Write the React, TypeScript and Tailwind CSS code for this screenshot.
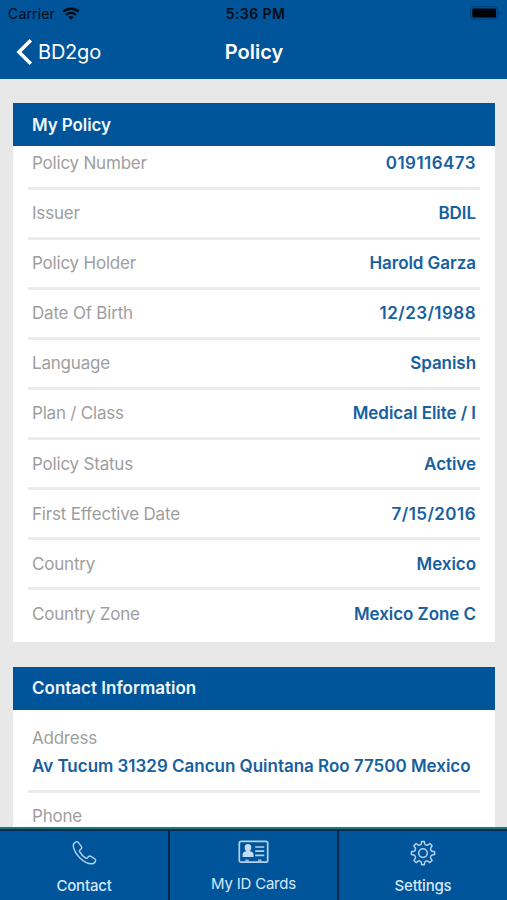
import React from 'react';

const policyRows = [
  { label: 'Policy Number', value: '019116473', numeric: true },
  { label: 'Issuer', value: 'BDIL' },
  { label: 'Policy Holder', value: 'Harold Garza' },
  { label: 'Date Of Birth', value: '12/23/1988', numeric: true },
  { label: 'Language', value: 'Spanish' },
  { label: 'Plan / Class', value: 'Medical Elite / I' },
  { label: 'Policy Status', value: 'Active' },
  { label: 'First Effective Date', value: '7/15/2016', numeric: true },
  { label: 'Country', value: 'Mexico' },
  { label: 'Country Zone', value: 'Mexico Zone C' },
];

const WifiIcon = () => (
  <svg width="18" height="13" viewBox="0 0 18 13" fill="none" stroke="#020d18">
    <path d="M1.200 4.700C5.600.700 12.400.700 16.800 4.700" strokeWidth="2.400" />
    <path d="M4.100 7.900c2.800-2.600 7-2.600 9.800 0" strokeWidth="2.300" />
    <path d="M9 12.700 6.300 10c1.500-1.300 3.900-1.300 5.400 0z" fill="#020d18" stroke="none" />
  </svg>
);

const BatteryIcon = () => (
  <svg width="30" height="14" viewBox="0 0 30 14">
    <rect x=".7" y=".7" width="27" height="12.600" rx="3" fill="none" stroke="#003f78" strokeWidth="1.100" />
    <rect x="2.300" y="2.500" width="23.800" height="9" rx="1.200" fill="#000308" />
    <path d="M28.600 5v4c.9-.4 1.200-1 1.200-2s-.3-1.600-1.200-2z" fill="#003f78" />
  </svg>
);

const PhoneIcon = () => (
  <svg width="26" height="26" viewBox="0 0 26 26" fill="none" stroke="#b4d3ef" strokeWidth="1.400" strokeLinejoin="round">
    <path d="M5.100 1.900c-1.800.8-3.100 2.200-2.800 4.300.6 4.100 3.400 8.600 6.900 12 3.400 3.300 7.500 5.500 11.400 5.600 2 0 3.300-1.200 4-2.900.3-.8 0-1.400-.6-1.900l-4.200-2.700c-.8-.5-1.600-.3-2.200.3l-1.300 1.400c-.5.5-1 .5-1.600.1-2.500-1.600-4.700-3.900-6.100-6.500-.3-.6-.3-1.100.2-1.500l1.300-1.200c.7-.6.900-1.400.4-2.200L7.300 2.400c-.5-.8-1.300-.9-2.200-.5z" />
  </svg>
);

const IdCardIcon = () => (
  <svg width="31" height="24" viewBox="0 0 31 24" fill="none">
    <rect x="1.300" y="1.300" width="28.400" height="20.900" rx="1.800" stroke="#b4d3ef" strokeWidth="1.700" />
    <path d="M8 21.800v-1.800h2v1.800M20.800 21.800v-1.800h2v1.800" stroke="#b4d3ef" strokeWidth="1.200" />
    <ellipse cx="10" cy="7.700" rx="3.300" ry="3.600" fill="#c2dcf5" />
    <path d="M4.600 16.900v-2.500c0-2.100 2-3 4-3.400h2.800c2 .4 4.100 1.300 4.100 3.400v2.500z" fill="#c2dcf5" />
    <path d="M17.200 7h9M17.200 11.200h9M17.200 15.400h9" stroke="#b4d3ef" strokeWidth="1.700" />
  </svg>
);

const GearIcon = () => (
  <svg width="26" height="26" viewBox="0 0 26 26" fill="none" stroke="#b4d3ef" strokeWidth="1.500" strokeLinejoin="round">
    <path d="M11.300 3.700 11.700 1.400H14.300L14.700 3.700Q15 4.500 15.800 4.900Q17 5.500 17.700 5.100L19.900 3.500 22.100 5.800 20.700 7.900Q20.300 8.800 20.800 9.900Q21.200 11 22.100 11.200L24.600 11.700V14.600L22.100 15Q21.200 15.300 20.800 16.300Q20.300 17.400 20.700 18.200L22.100 20.300 19.900 22.600 17.700 21.100Q16.800 20.600 15.800 21.100Q14.900 21.500 14.700 22.300L14.300 24.700H11.700L11.300 22.300Q11 21.500 10.100 21.100Q9.200 20.600 8.300 21.100L6.100 22.600 3.900 20.300 5.300 18.200Q5.700 17.400 5.200 16.300Q4.800 15.300 3.900 15L1.400 14.600V11.700L3.900 11.200Q4.800 11 5.200 9.900Q5.700 8.800 5.300 7.900L3.900 5.800 6.100 3.500 8.300 5.100Q9.100 5.500 10.200 4.900Q11 4.500 11.300 3.700Z" />
    <circle cx="13" cy="13.100" r="4.300" />
  </svg>
);

const SectionTitle: React.FC<{ children: React.ReactNode }> = ({ children }) => (
  <h2 className="relative flex h-[43px] items-center bg-[#005499] pl-[19px] text-[17px] font-semibold text-[#f0f8ff]">
    {children}
  </h2>
);

const App: React.FC = () => {
  return (
    <div className="flex h-[900px] w-[507px] flex-col overflow-hidden bg-[#e8e8e8] font-['Inter','Liberation_Sans',sans-serif]">
      <header className="h-[79px] shrink-0 bg-[#005499]">
        <div className="grid h-[26px] grid-cols-3 items-center pr-[7px] pl-2 text-[14px] text-[#020d18]">
          <div className="flex items-center gap-[7px] tracking-[0.15px]">
            <span>Carrier</span>
            <WifiIcon />
          </div>
          <span className="pl-[3px] text-center font-semibold tracking-[0.4px]">5:36 PM</span>
          <div className="flex justify-end">
            <BatteryIcon />
          </div>
        </div>
        <div className="grid h-[52px] grid-cols-3 items-center px-4 text-white">
          <button className="flex items-center gap-[5px] text-[20px] tracking-[-0.2px]">
            <svg width="17" height="26" viewBox="0 0 17 26" fill="none" stroke="white" strokeWidth="3.600">
              <path d="M14.800 1.300 3 13l11.800 11.700" />
            </svg>
            <span>BD2go</span>
          </button>
          <h1 className="pl-px text-center text-[20px] font-semibold">Policy</h1>
        </div>
      </header>

      <main className="flex min-h-0 flex-1 flex-col gap-[25px] overflow-hidden pt-6 pr-3 pl-[13px]">
        <section className="h-[539px] shrink-0 overflow-hidden bg-white">
          <SectionTitle>
            <span className="pt-0.5 tracking-[-0.1px]">My Policy</span>
          </SectionTitle>
          <ul className="-mt-[7px] px-[15px]">
            {policyRows.map((row) => (
              <li
                key={row.label}
                className="flex h-[50.05px] items-center justify-between border-b-3 border-[#ebebeb] px-1 pt-[2px] text-[17px] first:h-[50.5px] last:border-transparent"
              >
                <span className="tracking-[-0.2px] text-[#9e9e9e]">{row.label}</span>
                <span className={`font-semibold text-[#17609f] ${row.numeric ? 'tracking-[0.45px]' : 'tracking-[-0.05px]'}`}>
                  {row.value}
                </span>
              </li>
            ))}
          </ul>
        </section>

        <section className="h-60 shrink-0 bg-white">
          <SectionTitle>Contact Information</SectionTitle>
          <div className="px-[15px] text-[17px] leading-7">
            <div className="h-[83px] border-b-3 border-[#ebebeb] px-1 pt-[14px]">
              <p className="tracking-[-0.23px] text-[#9e9e9e]">Address</p>
              <p className="font-semibold tracking-[-0.02px] whitespace-nowrap text-[#17609f]">
                Av Tucum 31329 Cancun Quintana Roo 77500 Mexico
              </p>
            </div>
            <p className="px-1 pt-[9px] tracking-[-0.23px] text-[#9e9e9e]">Phone</p>
          </div>
        </section>
      </main>

      <nav className="grid h-[73px] shrink-0 grid-cols-[170px_169px_168px] border-t-2 border-[#078080] bg-[#005499] text-[15px] text-[#d3e8fb]">
        <button className="flex flex-col items-center border-t-2 border-r-2 border-[#00264d] pt-[9px] font-medium">
          <PhoneIcon />
          <span className="mt-[10px] leading-5 tracking-[-0.2px]">Contact</span>
        </button>
        <button className="flex flex-col items-center border-t-2 border-r-2 border-[#00264d] pt-[9px]">
          <IdCardIcon />
          <span className="mt-[10px] leading-5 tracking-[-0.2px]">My ID Cards</span>
        </button>
        <button className="flex flex-col items-center border-t-2 border-[#00264d] pt-[9px] font-medium">
          <GearIcon />
          <span className="mt-[10px] leading-5 tracking-[-0.2px]">Settings</span>
        </button>
      </nav>
    </div>
  );
};

export default App;
